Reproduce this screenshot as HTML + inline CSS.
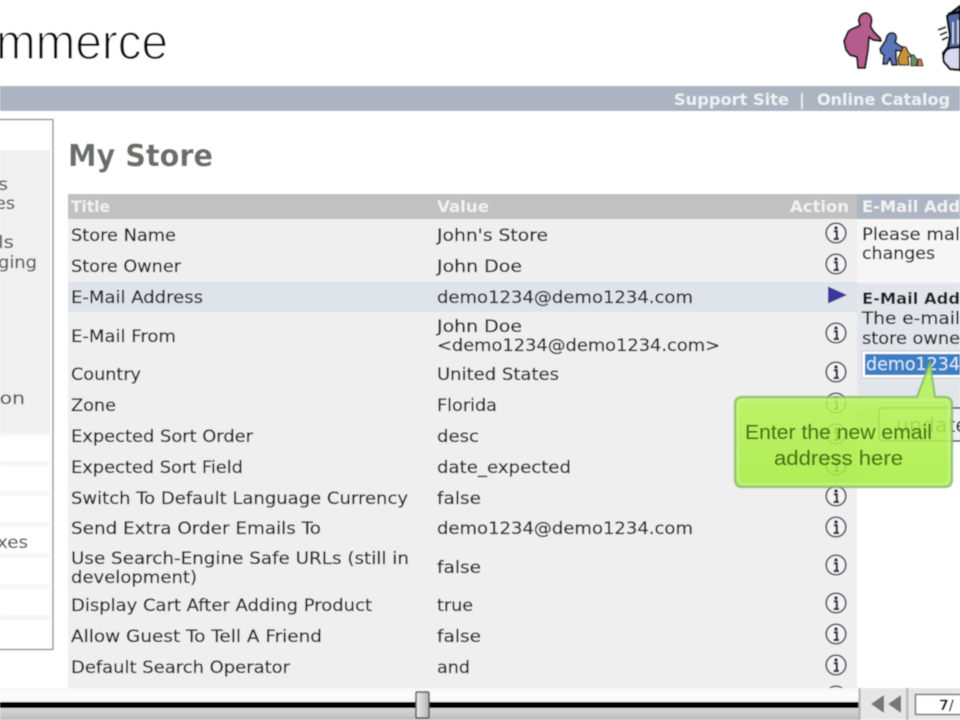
<!DOCTYPE html>
<html><head><meta charset="utf-8"><title>My Store</title>
<style>
html,body{margin:0;padding:0;background:#fff;width:960px;height:720px;overflow:hidden}
svg{display:block;position:absolute;left:0;top:0}
text{font-family:"DejaVu Sans","Liberation Sans",sans-serif;white-space:pre}
.t{font-size:17px;fill:#26262a;stroke:#26262a;stroke-width:.25px}
.b{font-size:16px;font-weight:bold;fill:#f1f1f1}
.l{font-size:17px;fill:#5c5c5c;stroke:#5c5c5c;stroke-width:.2px}
</style></head>
<body>
<svg width="960" height="720" viewBox="0 0 960 720" xmlns="http://www.w3.org/2000/svg">
<defs>
<filter id="s" x="-2%" y="-2%" width="104%" height="104%"><feGaussianBlur stdDeviation="0.45"/></filter>
<filter id="s2" x="-20%" y="-20%" width="140%" height="140%"><feGaussianBlur stdDeviation="0.9"/></filter>
<linearGradient id="pl" x1="0" y1="0" x2="0" y2="1"><stop offset="0" stop-color="#f6f6f6"/><stop offset="0.45" stop-color="#fdfdfd"/><stop offset="1" stop-color="#f2f2f2"/></linearGradient>
<linearGradient id="pb" x1="0" y1="0" x2="0" y2="1"><stop offset="0" stop-color="#d8d8d8"/><stop offset="1" stop-color="#bdbdbd"/></linearGradient>
<linearGradient id="th" x1="0" y1="0" x2="1" y2="0"><stop offset="0" stop-color="#ececec"/><stop offset="1" stop-color="#b5b5b5"/></linearGradient>
<linearGradient id="gr" x1="0" y1="0" x2="0" y2="1"><stop offset="0" stop-color="#b8f55a"/><stop offset="0.6" stop-color="#aef048"/><stop offset="1" stop-color="#a4ec3c"/></linearGradient>
<g id="i" fill="none" stroke="#505060"><circle r="9.8" stroke-width="1.7" fill="#f4f4f6"/><circle cy="-5" r="1.8" fill="#2e2e3a" stroke="none"/><path d="M-2.2-1.6H0.8V5.6M-2.4 6H3" stroke-width="2.2" stroke="#2e2e3a"/></g>
</defs>
<g filter="url(#s)">
<rect width="960" height="720" fill="#fff"/>
<rect y="86" width="960" height="25" fill="#acb4c2"/>
<!-- logo -->
<text x="-4" y="59" font-size="50" textLength="172" lengthAdjust="spacingAndGlyphs" style="font-family:'Liberation Sans',sans-serif" fill="#111" stroke="#fff" stroke-width="1" paint-order="fill">mmerce</text>
<!-- top bar links -->
<text x="674" y="105" font-size="16" font-weight="bold" fill="#eef0f3" textLength="115" lengthAdjust="spacingAndGlyphs">Support Site</text>
<text x="799" y="105" font-size="16" font-weight="bold" fill="#eef0f3">|</text>
<text x="817" y="105" font-size="16" font-weight="bold" fill="#eef0f3" textLength="133" lengthAdjust="spacingAndGlyphs">Online Catalog</text>
<!-- left panel -->
<rect x="-3" y="119.500" width="56" height="530" fill="#fff" stroke="#8e9294" stroke-width="1.4"/>
<rect x="0" y="150" width="50" height="283" fill="#f0f0f0"/>
<rect x="0" y="433" width="50" height="3" fill="#f7f7f7"/>
<rect x="0" y="461" width="50" height="5" fill="#f6f6f6"/>
<rect x="0" y="491" width="50" height="5" fill="#f6f6f6"/>
<rect x="0" y="522" width="50" height="5" fill="#f6f6f6"/>
<rect x="0" y="553" width="50" height="5" fill="#f6f6f6"/>
<rect x="0" y="584" width="50" height="5" fill="#f6f6f6"/>
<rect x="0" y="615" width="50" height="5" fill="#f6f6f6"/>
<g transform="translate(0,1)">
<text class="l" x="-2" y="189" textLength="10" lengthAdjust="spacingAndGlyphs">s</text>
<text class="l" x="-5" y="208" textLength="20" lengthAdjust="spacingAndGlyphs">es</text>
<text class="l" x="-2" y="247" textLength="16" lengthAdjust="spacingAndGlyphs">ls</text>
<text class="l" x="-2" y="267" textLength="39" lengthAdjust="spacingAndGlyphs">ging</text>
<text class="l" x="-6" y="403" textLength="31" lengthAdjust="spacingAndGlyphs">ion</text>
<text class="l" x="-3" y="547" textLength="31" lengthAdjust="spacingAndGlyphs">xes</text>
</g>
<!-- heading -->
<text x="68" y="166" font-size="30" font-weight="bold" fill="#6b6e6b" textLength="145" lengthAdjust="spacingAndGlyphs">My Store</text>
<!-- table -->
<rect x="68" y="194" width="789" height="494" fill="#efefef"/>
<rect x="68" y="194" width="789" height="25" fill="#c1c1c1"/>
<rect x="68" y="282" width="789" height="30" fill="#dfe4ea"/>
<text class="b" x="71" y="212" textLength="39" lengthAdjust="spacingAndGlyphs">Title</text>
<text class="b" x="437" y="212" textLength="52" lengthAdjust="spacingAndGlyphs">Value</text>
<text class="b" x="790" y="212" textLength="59" lengthAdjust="spacingAndGlyphs">Action</text>
<g transform="translate(0,1)">
<!-- titles -->
<text class="t" x="71" y="240" textLength="105" lengthAdjust="spacingAndGlyphs">Store Name</text>
<text class="t" x="71" y="271" textLength="110" lengthAdjust="spacingAndGlyphs">Store Owner</text>
<text class="t" x="71" y="302" textLength="132" lengthAdjust="spacingAndGlyphs">E-Mail Address</text>
<text class="t" x="71" y="341" textLength="105" lengthAdjust="spacingAndGlyphs">E-Mail From</text>
<text class="t" x="71" y="379" textLength="70" lengthAdjust="spacingAndGlyphs">Country</text>
<text class="t" x="71" y="410" textLength="45" lengthAdjust="spacingAndGlyphs">Zone</text>
<text class="t" x="71" y="441" textLength="182" lengthAdjust="spacingAndGlyphs">Expected Sort Order</text>
<text class="t" x="71" y="472" textLength="172" lengthAdjust="spacingAndGlyphs">Expected Sort Field</text>
<text class="t" x="71" y="503" textLength="337" lengthAdjust="spacingAndGlyphs">Switch To Default Language Currency</text>
<text class="t" x="71" y="533" textLength="250" lengthAdjust="spacingAndGlyphs">Send Extra Order Emails To</text>
<text class="t" x="71" y="563" textLength="338" lengthAdjust="spacingAndGlyphs">Use Search-Engine Safe URLs (still in</text>
<text class="t" x="71" y="582" textLength="126" lengthAdjust="spacingAndGlyphs">development)</text>
<text class="t" x="71" y="610" textLength="301" lengthAdjust="spacingAndGlyphs">Display Cart After Adding Product</text>
<text class="t" x="71" y="641" textLength="251" lengthAdjust="spacingAndGlyphs">Allow Guest To Tell A Friend</text>
<text class="t" x="71" y="672" textLength="219" lengthAdjust="spacingAndGlyphs">Default Search Operator</text>
<!-- values -->
<text class="t" x="437" y="240" textLength="111" lengthAdjust="spacingAndGlyphs">John's Store</text>
<text class="t" x="437" y="271" textLength="85" lengthAdjust="spacingAndGlyphs">John Doe</text>
<text class="t" x="437" y="302" textLength="256" lengthAdjust="spacingAndGlyphs">demo1234@demo1234.com</text>
<text class="t" x="437" y="331" textLength="85" lengthAdjust="spacingAndGlyphs">John Doe</text>
<text class="t" x="437" y="350" textLength="283" lengthAdjust="spacingAndGlyphs">&lt;demo1234@demo1234.com&gt;</text>
<text class="t" x="437" y="379" textLength="122" lengthAdjust="spacingAndGlyphs">United States</text>
<text class="t" x="437" y="410" textLength="60" lengthAdjust="spacingAndGlyphs">Florida</text>
<text class="t" x="437" y="441" textLength="42" lengthAdjust="spacingAndGlyphs">desc</text>
<text class="t" x="437" y="472" textLength="134" lengthAdjust="spacingAndGlyphs">date_expected</text>
<text class="t" x="437" y="503" textLength="44" lengthAdjust="spacingAndGlyphs">false</text>
<text class="t" x="437" y="533" textLength="256" lengthAdjust="spacingAndGlyphs">demo1234@demo1234.com</text>
<text class="t" x="437" y="572" textLength="44" lengthAdjust="spacingAndGlyphs">false</text>
<text class="t" x="437" y="610" textLength="36" lengthAdjust="spacingAndGlyphs">true</text>
<text class="t" x="437" y="641" textLength="44" lengthAdjust="spacingAndGlyphs">false</text>
<text class="t" x="437" y="672" textLength="33" lengthAdjust="spacingAndGlyphs">and</text>
</g>
<!-- action icons -->
<use href="#i" x="836" y="233"/>
<use href="#i" x="836" y="264"/>
<path d="M828 286.500L847 295L828 303.500Z" fill="#3a389c"/>
<use href="#i" x="836" y="333"/>
<use href="#i" x="836" y="372"/>
<use href="#i" x="836" y="403"/>
<use href="#i" x="836" y="434"/>
<use href="#i" x="836" y="465"/>
<use href="#i" x="836" y="496"/>
<use href="#i" x="836" y="527"/>
<use href="#i" x="836" y="565"/>
<use href="#i" x="836" y="603"/>
<use href="#i" x="836" y="634"/>
<use href="#i" x="836" y="665"/>
<use href="#i" x="836" y="696"/>
<!-- right column -->
<rect x="857" y="194" width="103" height="25" fill="#aeb5c3"/>
<rect x="857" y="219" width="103" height="64" fill="#f6f6f6"/>
<rect x="857" y="283" width="103" height="145" fill="#e2e6eb"/>
<text class="b" x="862" y="212" textLength="98" lengthAdjust="spacingAndGlyphs">E-Mail Add</text>
<text class="t" x="862" y="240" textLength="98" lengthAdjust="spacingAndGlyphs">Please mal</text>
<text class="t" x="862" y="259" textLength="73" lengthAdjust="spacingAndGlyphs">changes</text>
<text x="862" y="304" font-size="16" font-weight="bold" fill="#1a1a20" textLength="98" lengthAdjust="spacingAndGlyphs">E-Mail Add</text>
<text class="t" x="862" y="324" textLength="98" lengthAdjust="spacingAndGlyphs">The e-mail</text>
<text class="t" x="862" y="344" textLength="98" lengthAdjust="spacingAndGlyphs">store owne</text>
<rect x="862" y="351" width="100" height="27" fill="#fff" stroke="#c4c8ce"/>
<rect x="865" y="354" width="95" height="21" fill="#3c7fc4"/>
<text x="866" y="370" font-size="18" fill="#dbe8f6" textLength="94" lengthAdjust="spacingAndGlyphs">demo1234</text>
<!-- update button -->
<rect x="879" y="408" width="90" height="33" rx="3" fill="#eef0f3" stroke="#444" stroke-width="1.6"/>
<text x="896" y="432" font-size="20" fill="#222" textLength="72" lengthAdjust="spacingAndGlyphs">update</text>
<!-- player -->
<rect y="688" width="860" height="15" fill="url(#pl)"/>
<rect y="702" width="860" height="6" fill="#050505"/>
<rect y="708" width="860" height="12" fill="url(#pb)"/>
<rect x="860" y="688" width="100" height="32" fill="#e6e6e6"/>
<rect x="858.500" y="688" width="2" height="32" fill="#b0b0b0"/>
<rect x="906" y="688" width="2.500" height="32" fill="#bdbdbd"/>
<path d="M871 704L884 695V713Z M888 704L901 695V713Z" fill="#777"/>
<rect x="915.500" y="694.500" width="50" height="20" fill="#fff" stroke="#777" stroke-width="1.500"/>
<text x="939" y="710" font-size="14" font-weight="bold" fill="#222">7/</text>
<rect x="416" y="692" width="13" height="26" rx="1" fill="url(#th)" stroke="#555" stroke-width="1.500"/>
<!-- people icon -->
<g stroke="#1d1418" stroke-width="2" stroke-linejoin="round">
<path d="M860 25C857 19 860 14 865 13C870 13 873 18 871 24C870 27 872 29 874 32L880 38L881 41L873 40L869 37L868 50L865 68L858 68L857 57L850 55L846 50L844 41L848 32C851 28 857 28 860 25Z" fill="#b55d8d"/>
<path d="M886 40C886 36 889 32 893 33C897 34 897 39 895 42C898 44 900 47 904 47L906 49L899 51L896 50L896 58L897 65L892 65L890 58L887 64L883 64L884 55L881 53L880 49Z" fill="#5a75b8" stroke-width="1.700"/>
<path d="M902 50C902 46 906 46 907 49L908 52L912 56L908 57L909 65L899 65L898 58Z" fill="#cc9238" stroke-width="1.300"/>
<path d="M911 57C911 54 915 54 915 57L918 60L916 66L911 66Z" fill="#68906a" stroke-width="1.100"/>
<path d="M918 61C918 58 921 58 922 61L923 66L917 66Z" fill="#c97a55" stroke-width="1"/>
</g>
<!-- trash icon -->
<g stroke="#111" stroke-linejoin="round">
<path d="M947 16L960 6V70L950 69L944 62L943 53L948 47L950 36Z" fill="#55689f" stroke-width="2.400"/>
<path d="M944 62C942 55 945 50 950 48L960 47V70L950 69Z" fill="#d8d9f0" stroke-width="2.200"/>
<path d="M948 14L960 12" stroke-width="3"/>
<path d="M938 30L946 27M940 35L947 32M942 40L948 37" stroke-width="2" fill="none"/>
<path d="M953 22V44M958 20V44" stroke="#dfe4ee" stroke-width="1.500"/>
</g>
</g>
<!-- callout -->
<g filter="url(#s2)">
<path d="M742 397H917L930 363L935 397H945Q952 397 952 404V479Q952 487 945 487H742Q735 487 735 479V404Q735 397 742 397Z" fill="url(#gr)" fill-opacity="0.86" stroke="#86b56a" stroke-width="1.800"/>
<rect x="738" y="400" width="211" height="84" rx="6" fill="none" stroke="#c8f494" stroke-width="2" opacity=".7"/>
</g>
<g filter="url(#s)">
<text x="745" y="439" font-size="20.500" fill="#467216" style="font-family:'Liberation Sans',sans-serif" textLength="187" lengthAdjust="spacingAndGlyphs">Enter the new email</text>
<text x="774" y="465" font-size="20.500" fill="#467216" style="font-family:'Liberation Sans',sans-serif" textLength="129" lengthAdjust="spacingAndGlyphs">address here</text>
</g>
</svg>
</body></html>
